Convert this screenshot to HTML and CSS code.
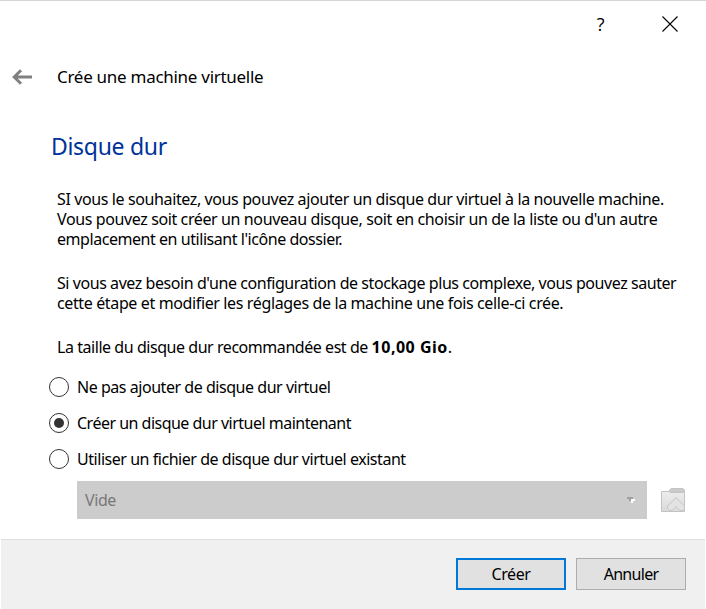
FILE: index.html
```
<!DOCTYPE html>
<html lang="fr">
<head>
<meta charset="utf-8">
<title>Crée une machine virtuelle</title>
<link rel="stylesheet" href="styles.css">
</head>
<body>
<main class="dialog">
  <header class="titlebar">
    <span class="help">?</span>
    <svg class="close" width="16" height="16" viewBox="0 0 16 16"><path d="M.5 .5l15 15M15.500 .5l-15 15"/></svg>
  </header>
  <div class="nav">
    <svg class="back" width="20" height="16" viewBox="0 0 20 16"><path d="M9 1.200L2.200 8L9 14.800M2.500 8H20"/></svg>
    <span class="title">Crée une machine virtuelle</span>
  </div>
  <h1 class="heading">Disque dur</h1>
  <section class="copy">
    <p><span class="l1">SI vous le souhaitez, vous pouvez ajouter un disque dur virtuel à la nouvelle machine.</span><br><span class="l2">Vous pouvez soit créer un nouveau disque, soit en choisir un de la liste ou d'un autre</span><br><span class="l3">emplacement en utilisant l'icône dossier.</span></p>
    <p><span class="l4">Si vous avez besoin d'une configuration de stockage plus complexe, vous pouvez sauter</span><br><span class="l5">cette étape et modifier les réglages de la machine une fois celle-ci crée.</span></p>
    <p><span class="l6">La taille du disque dur recommandée est de </span><b>10,00 Gio</b>.</p>
  </section>
  <div class="options">
    <label class="option"><i class="radio"></i><span class="o1">Ne pas ajouter de disque dur virtuel</span></label>
    <label class="option"><i class="radio checked"></i><span class="o2">Créer un disque dur virtuel maintenant</span></label>
    <label class="option"><i class="radio"></i><span class="o3">Utiliser un fichier de disque dur virtuel existant</span></label>
  </div>
  <div class="picker">
    <div class="select"><span>Vide</span>
      <svg width="8" height="6" viewBox="0 0 8 6" shape-rendering="crispEdges"><path fill="#a0a0a0" d="M0 0h6v2H4v2H2V2H0z"/><path fill="#fff" d="M4 2h4v2H6v2H4z"/></svg>
    </div>
    <svg class="folder" width="26" height="26" viewBox="0 0 26 26">
      <defs><linearGradient id="g" x1="0" y1="0" x2="0" y2="1"><stop offset="0" stop-color="#ededed"/><stop offset="1" stop-color="#dadada"/></linearGradient></defs>
      <path d="M9.500 5V3L11 1.500H23L24.500 3V5z" fill="#cbcbcb" stroke="#c4c4c4"/>
      <path d="M1.500 4.500H9L10.500 5.500H24.500V24.500H1.500z" fill="url(#g)" stroke="#c3c3c3"/>
      <path d="M16 10.500L24.500 19V22L22.500 23.500H20L16 19.500L12 23.500H9.500L7.500 21.500V19z" fill="#e3e3e3" stroke="#c5c5c5"/>
    </svg>
  </div>
  <footer class="footer">
    <button class="primary">Créer</button>
    <button class="cancel">Annuler</button>
  </footer>
</main>
</body>
</html>
```
FILE: styles.css
```
* { box-sizing: border-box; }
body {
  margin: 0;
  background: #fff;
  color: #000;
  font: 16px/20px "Noto Sans", sans-serif;
  letter-spacing: -0.4px;
  white-space: nowrap;
}
.dialog {
  width: 706px;
  height: 609px;
  overflow: hidden;
  border-top: 1px solid #d4d4d4;
  display: flex;
  flex-direction: column;
}
.titlebar {
  height: 45px;
  padding: 0 28px 0 0;
  display: flex;
  justify-content: flex-end;
  align-items: center;
  gap: 58px;
}
.help { font: 18px/20px "Open Sans", sans-serif; }
.close { fill: none; stroke: #000; stroke-width: 1.1; }
.nav {
  height: 62px;
  padding: 0 0 0 12px;
  display: flex;
  align-items: center;
  gap: 25px;
}
.back { fill: none; stroke: #808080; stroke-width: 3; }
.title { font-size: 17px; letter-spacing: -0.28px; }
.heading {
  margin: 22px 0 0 51px;
  font-size: 23px;
  line-height: 32px;
  font-weight: 400;
  letter-spacing: -0.3px;
  color: #003399;
}
.copy { margin: 27px 0 0 57px; }
.copy p { margin: 0 0 24px; }
.copy b { letter-spacing: 0.5px; }
.l1, .l2 { letter-spacing: -0.385px; }
.l3 { letter-spacing: -0.45px; }
.l4 { letter-spacing: -0.435px; }
.l5 { letter-spacing: -0.37px; }
.l6 { letter-spacing: -0.45px; }
.o1, .o3 { letter-spacing: -0.46px; }
.o2 { letter-spacing: -0.51px; }
.options {
  margin: -4px 0 0 49px;
  display: flex;
  flex-direction: column;
  gap: 16px;
}
.option { height: 20px; display: flex; align-items: center; gap: 8px; }
.radio {
  width: 20px;
  height: 20px;
  border: 1.5px solid #333;
  border-radius: 50%;
  display: grid;
  place-items: center;
}
.checked::after {
  content: "";
  width: 10px;
  height: 10px;
  border-radius: 50%;
  background: #333;
}
.picker { margin: 12px 0 0 77px; display: flex; align-items: center; gap: 13px; }
.select {
  width: 570px;
  height: 38px;
  padding: 0 12px 0 8px;
  background: #ccc;
  color: #787878;
  display: flex;
  align-items: center;
  justify-content: space-between;
}
.footer {
  margin: auto 1px 0;
  height: 70px;
  padding: 18px 19px 0 0;
  background: #f0f0f0;
  border-top: 1px solid #dfdfdf;
  display: flex;
  justify-content: flex-end;
  gap: 10px;
}
button {
  width: 110px;
  height: 32px;
  padding: 0;
  border: 1px solid #adadad;
  background: #e1e1e1;
  color: #000;
  font: inherit;
  letter-spacing: inherit;
}
.primary { border: 2px solid #0078d7; }
.cancel { letter-spacing: -0.7px; }
```
